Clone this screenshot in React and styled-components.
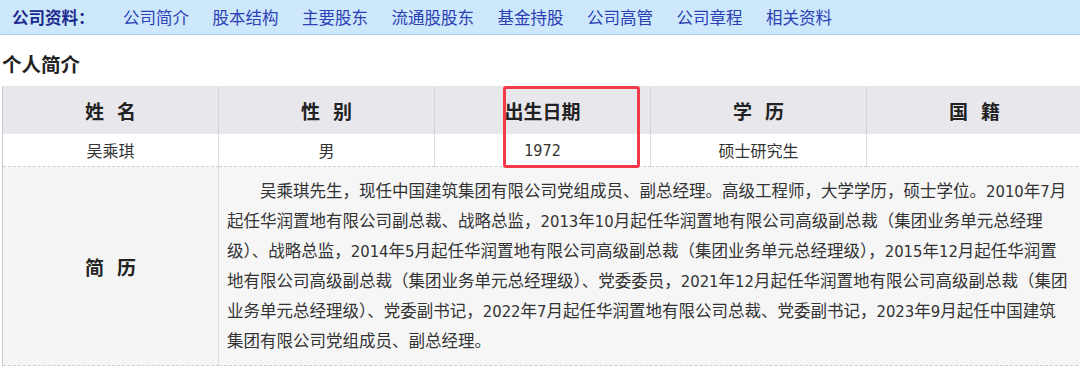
import styled, { createGlobalStyle } from "styled-components";

const GlobalStyle = createGlobalStyle`
  body {
    margin: 0;
    background: #fff;
    font-family: "Liberation Sans", "Noto Sans CJK SC", sans-serif;
    color: #333;
  }
`;

const NavBar = styled.div`
  display: flex;
  align-items: center;
  gap: 23.5px;
  height: 35px;
  box-sizing: border-box;
  padding-left: 12px;
  background: #cde8fb;
  border-bottom: 1px solid #a9d2ee;
  font-size: 16.5px;
`;

const NavLabel = styled.span`
  font-weight: bold;
  color: #1c2a8c;
  margin-right: 5px;
`;

const NavLink = styled.a`
  color: #2c3fb4;
  text-decoration: none;
  cursor: pointer;
`;

const SectionTitle = styled.h3`
  margin: 0;
  height: 51px;
  box-sizing: border-box;
  padding: 18px 2px 0;
  line-height: 24px;
  font-size: 19.5px;
  font-weight: bold;
  color: #222;
`;

const Table = styled.div`
  position: relative;
  margin-left: 2px;
  width: 1080px;
  display: grid;
  grid-template-columns: repeat(5, 1fr);
  border-left: 1px solid #c8c8d0;
  font-family: "DejaVu Sans Condensed", "Liberation Sans", "Noto Sans CJK SC", sans-serif;
`;

const HeadCell = styled.div`
  height: 48px;
  display: flex;
  align-items: center;
  justify-content: center;
  background: #e8e8ec;
  border-right: 1px solid #d4d4da;
  font-size: 19px;
  font-weight: bold;
  word-spacing: 7px;
  color: #222;
`;

const DataCell = styled.div`
  height: 33px;
  box-sizing: border-box;
  display: flex;
  align-items: center;
  justify-content: center;
  background: #fff;
  border-right: 1px solid #dcdcdc;
  border-bottom: 1px dashed #cfcfcf;
  font-size: 16px;
`;

const BioLabel = styled.div`
  display: flex;
  align-items: center;
  justify-content: center;
  background: #f5f5f5;
  border-right: 1px solid #dcdcdc;
  border-bottom: 1px dashed #cfcfcf;
  font-size: 19px;
  font-weight: bold;
  word-spacing: 7px;
  color: #222;
`;

const BioText = styled.div`
  grid-column: span 4;
  background: #f6f6f6;
  border-bottom: 1px dashed #cfcfcf;
  padding: 10px 6px 8px 8px;
  line-height: 30px;
  font-size: 16.5px;
  white-space: nowrap;
`;

const Indent = styled.span`
  display: inline-block;
  width: 2em;
`;

const Marker = styled.div`
  position: absolute;
  left: 500px;
  top: 0;
  width: 137px;
  height: 82px;
  box-sizing: border-box;
  border: 3px solid #f23a48;
  border-radius: 3px;
  pointer-events: none;
`;

const links = ["公司简介", "股本结构", "主要股东", "流通股股东", "基金持股", "公司高管", "公司章程", "相关资料"];
const heads = ["姓 名", "性 别", "出生日期", "学 历", "国 籍"];
const row = ["吴乘琪", "男", "1972", "硕士研究生", ""];
const bio = [
  "吴乘琪先生，现任中国建筑集团有限公司党组成员、副总经理。高级工程师，大学学历，硕士学位。2010年7月",
  "起任华润置地有限公司副总裁、战略总监，2013年10月起任华润置地有限公司高级副总裁（集团业务单元总经理",
  "级）、战略总监，2014年5月起任华润置地有限公司高级副总裁（集团业务单元总经理级），2015年12月起任华润置",
  "地有限公司高级副总裁（集团业务单元总经理级）、党委委员，2021年12月起任华润置地有限公司高级副总裁（集团",
  "业务单元总经理级）、党委副书记，2022年7月起任华润置地有限公司总裁、党委副书记，2023年9月起任中国建筑",
  "集团有限公司党组成员、副总经理。",
];

export default function App() {
  return (
    <>
      <GlobalStyle />
      <NavBar>
        <NavLabel>公司资料：</NavLabel>
        {links.map((l) => (
          <NavLink key={l}>{l}</NavLink>
        ))}
      </NavBar>
      <SectionTitle>个人简介</SectionTitle>
      <Table>
        {heads.map((h) => (
          <HeadCell key={h}>{h}</HeadCell>
        ))}
        {row.map((v, i) => (
          <DataCell key={i}>{v}</DataCell>
        ))}
        <BioLabel>简 历</BioLabel>
        <BioText>
          {bio.map((line, i) => (
            <div key={i}>
              {i === 0 && <Indent />}
              {line}
            </div>
          ))}
        </BioText>
        <Marker />
      </Table>
    </>
  );
}
